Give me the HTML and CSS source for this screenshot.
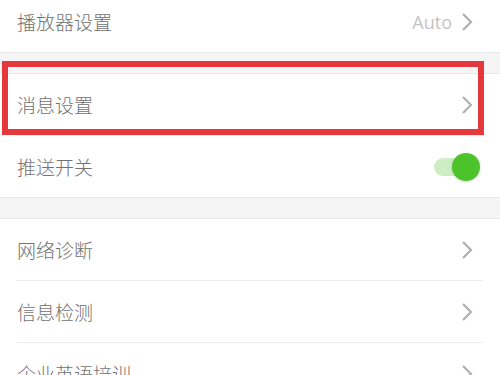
FILE: index.html
```html
<!DOCTYPE html>
<html lang="zh-CN">
<head>
    <meta charset="UTF-8">
    <meta name="viewport" content="width=device-width, initial-scale=1.0">
    <title>设置</title>
    <link rel="stylesheet" href="styles.css">
</head>
<body>
    <div class="page">
        <div class="group group-first">
            <div class="row">
                <span class="label">播放器设置</span>
                <span class="value">Auto</span>
                <svg class="arrow" viewBox="0 0 12 20"><polyline points="2,2 10,10 2,18"/></svg>
            </div>
        </div>
        <div class="group">
            <div class="row">
                <span class="label">消息设置</span>
                <svg class="arrow" viewBox="0 0 12 20"><polyline points="2,2 10,10 2,18"/></svg>
            </div>
            <div class="row">
                <span class="label">推送开关</span>
                <div class="switch"><div class="knob"></div></div>
            </div>
        </div>
        <div class="group">
            <div class="row">
                <span class="label">网络诊断</span>
                <svg class="arrow" viewBox="0 0 12 20"><polyline points="2,2 10,10 2,18"/></svg>
            </div>
            <div class="row">
                <span class="label">信息检测</span>
                <svg class="arrow" viewBox="0 0 12 20"><polyline points="2,2 10,10 2,18"/></svg>
            </div>
            <div class="row">
                <span class="label">企业英语培训</span>
                <svg class="arrow" viewBox="0 0 12 20"><polyline points="2,2 10,10 2,18"/></svg>
            </div>
        </div>
        <!-- highlight box drawn over the message row -->
        <div class="highlight"></div>
    </div>
</body>
</html>
```

FILE: styles.css
```css
body {
    margin: 0;
    padding: 0;
    background-color: #f5f5f5;
    font-family: "Noto Sans CJK SC", "Noto Sans", sans-serif;
    overflow: hidden;
}
.page {
    position: relative;
    height: 375px;
    overflow: hidden;
}
.group {
    background-color: white;
    border-top: 1px solid #e8e8e8;
    border-bottom: 1px solid #e8e8e8;
    margin-bottom: 20px;
}
.group-first {
    margin-top: -9px;
    border-top: none;
}
.row {
    display: flex;
    align-items: center;
    height: 61px;
    margin: 0 17px;
    border-bottom: 1px solid #ececec;
}
.row:last-child {
    border-bottom: none;
}
.label {
    flex: 1;
    font-size: 19px;
    font-weight: 300;
    color: #727272;
}
.value {
    font-family: "Open Sans", "Noto Sans", sans-serif;
    font-size: 18px;
    color: #c4c4c4;
    margin-right: 9px;
}
.arrow {
    width: 12px;
    height: 20px;
    margin-right: 10px;
}
.arrow polyline {
    fill: none;
    stroke: #b0b0b0;
    stroke-width: 2.2;
}
.switch {
    position: relative;
    width: 38px;
    height: 18px;
    border-radius: 9px;
    background-color: #cdeec4;
    margin-right: 11px;
}
.knob {
    position: absolute;
    right: -8px;
    top: -5px;
    width: 28px;
    height: 28px;
    border-radius: 50%;
    background-color: #4cc22b;
    box-shadow: 0 1px 3px rgba(0, 0, 0, 0.15);
}
.highlight {
    position: absolute;
    left: 2px;
    top: 61px;
    width: 482px;
    height: 74px;
    box-sizing: border-box;
    border: 6px solid #e4383c;
}
```
